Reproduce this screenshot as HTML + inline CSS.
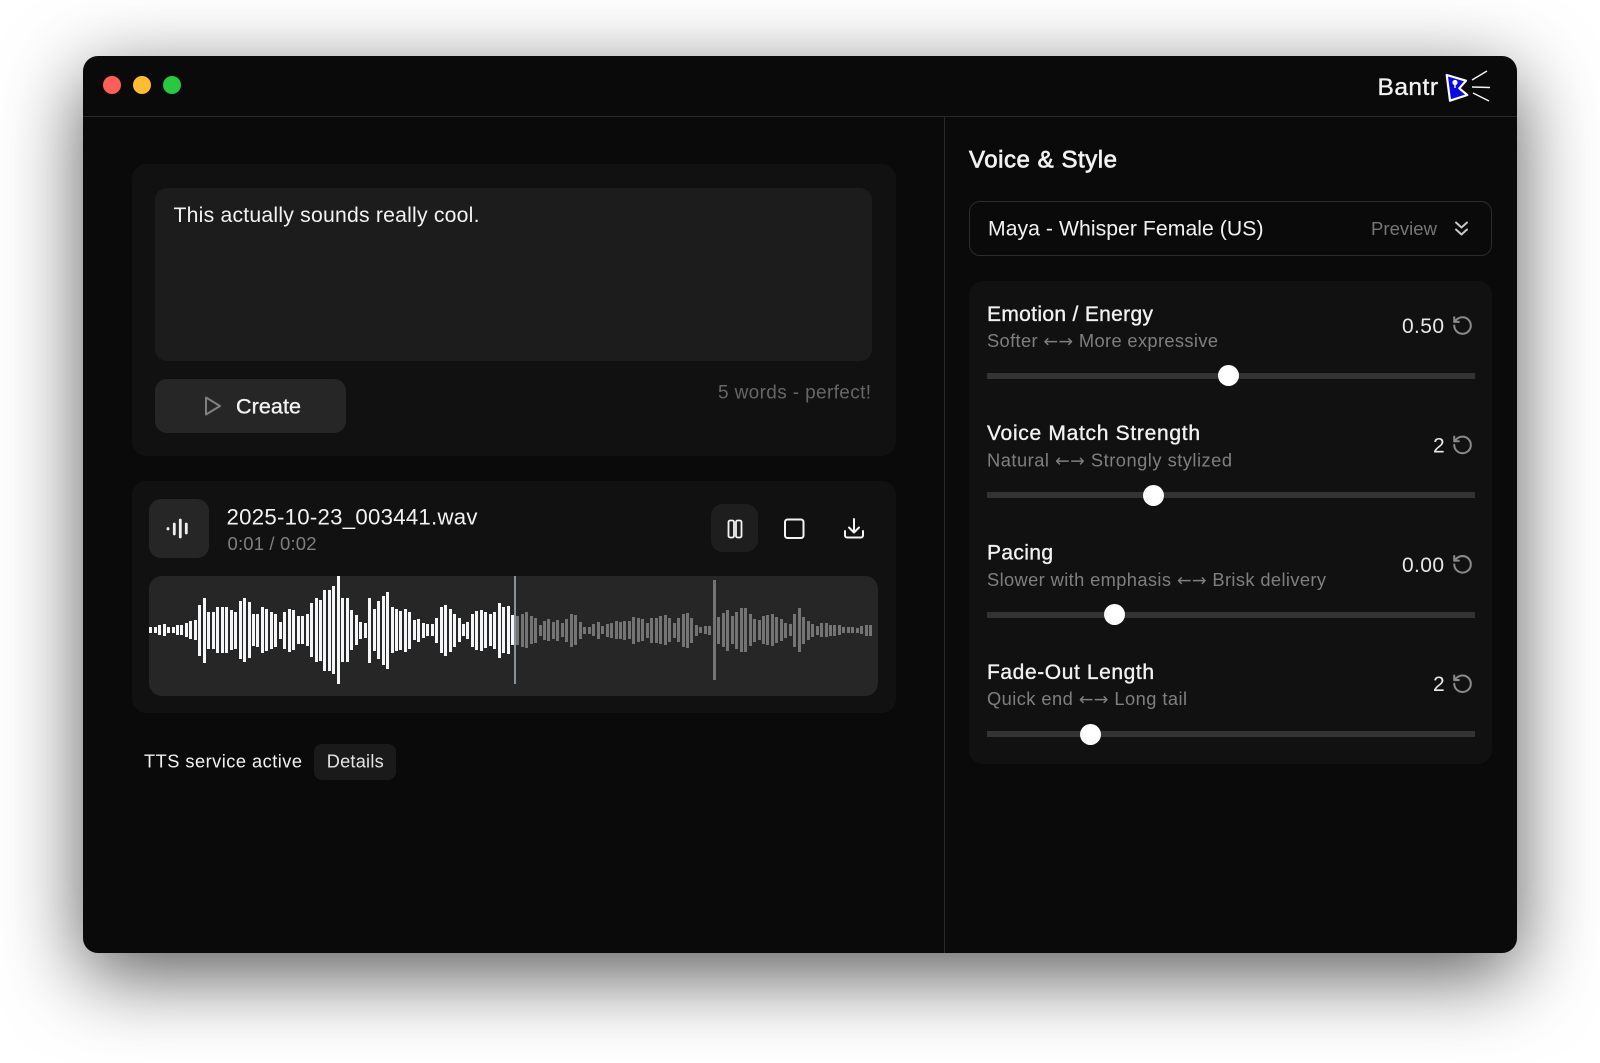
<!DOCTYPE html>
<html lang="en"><head><meta charset="utf-8"><title>Bantr</title>
<style>
html,body{margin:0;padding:0;background:#fff;width:1600px;height:1063px;overflow:hidden}
div,svg{position:absolute;box-sizing:border-box}
.win{left:83px;top:56px;width:1434px;height:897px;background:#0a0a0a;border-radius:15px;box-shadow:0 22px 80px rgba(0,0,0,.65)}
.card{background:#111;border-radius:14px}
.wave{left:149.2px;top:480px;height:300px;display:flex;align-items:center}
.wave i{display:block;flex:none;width:3px;margin-right:1.47px;background:#f4f6f8}
.wave.g{left:516.2px}
.wave.g i{background:#747474;margin-right:1.475px}
.tr{left:986.5px;width:488.5px;height:6px;background:#333}
.th{width:21px;height:21px;border-radius:50%;background:#fff}
text{font-family:"Liberation Sans",sans-serif;fill:#f2f2f2}
tspan{font-family:"DejaVu Sans",sans-serif}
.m{stroke:#f2f2f2;stroke-width:.35}
.t{font-size:21px}
.s{font-size:18.3px;fill:#7f7f7f}
.s tspan{font-size:17.5px}
.v{font-size:21px;fill:#e8e8e8}
</style></head><body>
<div class="win"></div>
<div style="left:83px;top:115.5px;width:1434px;height:1px;background:#2a2a2a"></div>
<div style="left:943.5px;top:116px;width:1px;height:837px;background:#2a2a2a"></div>
<div style="left:103px;top:76px;width:18px;height:18px;border-radius:50%;background:#ff5f57"></div>
<div style="left:133px;top:76px;width:18px;height:18px;border-radius:50%;background:#febc2e"></div>
<div style="left:163px;top:76px;width:18px;height:18px;border-radius:50%;background:#28c840"></div>

<div class="card" style="left:131.5px;top:164px;width:764px;height:292px"></div>
<div style="left:155px;top:188px;width:716.5px;height:173px;background:#1c1c1c;border-radius:12px"></div>
<div style="left:155px;top:379px;width:191px;height:54px;background:#262626;border-radius:12px"></div>

<div class="card" style="left:131.5px;top:481px;width:764px;height:232px"></div>
<div style="left:149px;top:499px;width:60px;height:59px;background:#262626;border-radius:12px"></div>
<div style="left:710.5px;top:504px;width:47.5px;height:48px;background:#1e1e1e;border-radius:12px"></div>
<div style="left:149px;top:576px;width:728.5px;height:120px;background:#262626;border-radius:13px"></div>

<div class="wave"><i style="height:6px"></i><i style="height:6px"></i><i style="height:9.3px"></i><i style="height:11.3px"></i><i style="height:6px"></i><i style="height:6px"></i><i style="height:9.3px"></i><i style="height:9.3px"></i><i style="height:14px"></i><i style="height:18px"></i><i style="height:20px"></i><i style="height:51px"></i><i style="height:65px"></i><i style="height:37px"></i><i style="height:37px"></i><i style="height:46px"></i><i style="height:46px"></i><i style="height:46px"></i><i style="height:40px"></i><i style="height:37px"></i><i style="height:58px"></i><i style="height:64px"></i><i style="height:56px"></i><i style="height:32px"></i><i style="height:33px"></i><i style="height:46px"></i><i style="height:42px"></i><i style="height:37px"></i><i style="height:33px"></i><i style="height:17px"></i><i style="height:37px"></i><i style="height:43px"></i><i style="height:40px"></i><i style="height:28px"></i><i style="height:28px"></i><i style="height:32px"></i><i style="height:54px"></i><i style="height:64px"></i><i style="height:61px"></i><i style="height:81px"></i><i style="height:81px"></i><i style="height:88px"></i><i style="height:108px"></i><i style="height:64px"></i><i style="height:64px"></i><i style="height:40px"></i><i style="height:30px"></i><i style="height:17px"></i><i style="height:15px"></i><i style="height:65px"></i><i style="height:42px"></i><i style="height:58px"></i><i style="height:69px"></i><i style="height:77px"></i><i style="height:46px"></i><i style="height:42px"></i><i style="height:39px"></i><i style="height:43px"></i><i style="height:37px"></i><i style="height:20px"></i><i style="height:23px"></i><i style="height:15px"></i><i style="height:12px"></i><i style="height:12px"></i><i style="height:25px"></i><i style="height:46px"></i><i style="height:51px"></i><i style="height:43px"></i><i style="height:33px"></i><i style="height:24px"></i><i style="height:12px"></i><i style="height:17px"></i><i style="height:33px"></i><i style="height:39px"></i><i style="height:41px"></i><i style="height:36px"></i><i style="height:32px"></i><i style="height:37px"></i><i style="height:55px"></i><i style="height:46px"></i><i style="height:48px"></i><i style="height:30px"></i></div>
<div class="wave g"><i style="height:29px"></i><i style="height:33px"></i><i style="height:36px"></i><i style="height:28px"></i><i style="height:25px"></i><i style="height:11px"></i><i style="height:19px"></i><i style="height:22px"></i><i style="height:17px"></i><i style="height:21px"></i><i style="height:14px"></i><i style="height:23px"></i><i style="height:33px"></i><i style="height:30px"></i><i style="height:17px"></i><i style="height:7px"></i><i style="height:7px"></i><i style="height:12px"></i><i style="height:17px"></i><i style="height:8px"></i><i style="height:13px"></i><i style="height:15px"></i><i style="height:18px"></i><i style="height:17px"></i><i style="height:19px"></i><i style="height:18px"></i><i style="height:27px"></i><i style="height:24px"></i><i style="height:22px"></i><i style="height:15px"></i><i style="height:25px"></i><i style="height:25px"></i><i style="height:28px"></i><i style="height:30px"></i><i style="height:24px"></i><i style="height:15px"></i><i style="height:24px"></i><i style="height:33px"></i><i style="height:35px"></i><i style="height:25px"></i><i style="height:11px"></i><i style="height:6px"></i><i style="height:8px"></i><i style="height:9px"></i><i style="height:100px"></i><i style="height:27px"></i><i style="height:34px"></i><i style="height:41px"></i><i style="height:28px"></i><i style="height:37px"></i><i style="height:44px"></i><i style="height:44px"></i><i style="height:32px"></i><i style="height:23px"></i><i style="height:20px"></i><i style="height:28px"></i><i style="height:30px"></i><i style="height:32px"></i><i style="height:26px"></i><i style="height:22px"></i><i style="height:15px"></i><i style="height:12px"></i><i style="height:33px"></i><i style="height:44px"></i><i style="height:27px"></i><i style="height:19px"></i><i style="height:13px"></i><i style="height:9px"></i><i style="height:14px"></i><i style="height:14px"></i><i style="height:11px"></i><i style="height:11px"></i><i style="height:10px"></i><i style="height:6px"></i><i style="height:6px"></i><i style="height:6px"></i><i style="height:5px"></i><i style="height:8px"></i><i style="height:11px"></i><i style="height:11px"></i></div>
<div style="left:514px;top:576px;width:1.5px;height:108px;background:#8b919b"></div>

<div style="left:314px;top:743.5px;width:82px;height:36px;background:#1a1a1a;border-radius:8px"></div>

<div style="left:969px;top:201px;width:523px;height:55px;border:1.5px solid #2c2c2c;border-radius:11px"></div>
<div class="card" style="left:969px;top:281px;width:523px;height:483px"></div>
<div class="tr" style="top:373px"></div><div class="th" style="left:1218px;top:365px"></div>
<div class="tr" style="top:492.4px"></div><div class="th" style="left:1142.5px;top:484.9px"></div>
<div class="tr" style="top:611.8px"></div><div class="th" style="left:1104px;top:604.3px"></div>
<div class="tr" style="top:731.2px"></div><div class="th" style="left:1080px;top:723.7px"></div>

<svg width="1600" height="1063" viewBox="0 0 1600 1063" style="left:0;top:0">
<text class="m" x="1377.5" y="95" font-size="24.5" textLength="60.5" lengthAdjust="spacing">Bantr</text>
<polygon points="1446.7,75 1466,80.7 1459.3,88.3 1467.3,95 1450,100.7" fill="#0a0ae6" stroke="#fff" stroke-width="2.2" stroke-linejoin="round"/>
<circle cx="1455" cy="82.5" r="2.6" fill="#fff"/><path d="M1455 84v4" stroke="#fff" stroke-width="1.4"/>
<path d="M1472 80l15-9M1472 87l18 .5M1473 93l16 8" stroke="#f2f2f2" stroke-width="1.5" fill="none"/>

<text x="173.5" y="222" font-size="21.2" textLength="306" lengthAdjust="spacing">This actually sounds really cool.</text>
<polygon points="206,397.5 206,414.5 220,406" fill="none" stroke="#808080" stroke-width="2" stroke-linejoin="round"/>
<text class="m" x="236" y="413.5" font-size="21.5" textLength="65" lengthAdjust="spacing">Create</text>
<text x="718" y="398.5" font-size="19" textLength="153" lengthAdjust="spacing" style="fill:#666">5 words - perfect!</text>

<path d="M168 528.5v.5M174.3 524v10M180.3 520v17M186.3 524v9" stroke="#f0f0f0" stroke-width="2.8" stroke-linecap="round" fill="none"/>
<text x="226.5" y="524.5" font-size="22.2" textLength="251" lengthAdjust="spacing">2025-10-23_003441.wav</text>
<text x="227.5" y="550" font-size="18.5" textLength="89" lengthAdjust="spacing" style="fill:#7f7f7f">0:01 / 0:02</text>

<g fill="none" stroke="#f4f4f4" stroke-width="1.8">
<rect x="728.5" y="520.5" width="5.5" height="17" rx="1.6"/>
<rect x="736" y="520.5" width="5.5" height="17" rx="1.6"/>
<rect x="785" y="519.5" width="18.5" height="18.5" rx="2.5" stroke-width="2"/>
<path d="M845 531v4.5a2 2 0 0 0 2 2h14a2 2 0 0 0 2-2V531M854 519v13.5M849 527.5l5 5 5-5" stroke-width="2" stroke-linecap="round" stroke-linejoin="round"/>
</g>

<text x="144" y="767.7" font-size="18.2" textLength="158" lengthAdjust="spacing">TTS service active</text>
<text x="326.7" y="767.7" font-size="18.2" textLength="57" lengthAdjust="spacing" style="fill:#e4e4e4">Details</text>

<text x="969" y="167.5" font-size="24" textLength="148" lengthAdjust="spacing" style="stroke:#f2f2f2;stroke-width:.7">Voice &amp; Style</text>
<text x="988" y="235.5" font-size="21.2" textLength="275.5" lengthAdjust="spacing">Maya - Whisper Female (US)</text>
<text x="1371" y="235" font-size="18.5" textLength="66" lengthAdjust="spacing" style="fill:#777">Preview</text>
<path d="M1456 223l5.5 5 5.5-5M1456 230l5.5 5 5.5-5" transform="translate(0,-.5)" fill="none" stroke="#c8c8c8" stroke-width="2" stroke-linecap="round" stroke-linejoin="round"/>

<text class="t m" x="987" y="320.8" textLength="166" lengthAdjust="spacing">Emotion / Energy</text>
<text class="s" x="987" y="347" textLength="231" lengthAdjust="spacing">Softer <tspan>←→</tspan> More expressive</text>
<text class="v" x="1402" y="333" textLength="42" lengthAdjust="spacing">0.50</text>

<text class="t m" x="987" y="440.2" textLength="213" lengthAdjust="spacing">Voice Match Strength</text>
<text class="s" x="987" y="466.4" textLength="245" lengthAdjust="spacing">Natural <tspan>←→</tspan> Strongly stylized</text>
<text class="v" x="1433" y="452.4" textLength="11.5" lengthAdjust="spacing">2</text>

<text class="t m" x="987" y="559.6" textLength="66" lengthAdjust="spacing">Pacing</text>
<text class="s" x="987" y="585.8" textLength="339" lengthAdjust="spacing">Slower with emphasis <tspan>←→</tspan> Brisk delivery</text>
<text class="v" x="1402" y="571.8" textLength="42" lengthAdjust="spacing">0.00</text>

<text class="t m" x="987" y="679" textLength="167" lengthAdjust="spacing">Fade-Out Length</text>
<text class="s" x="987" y="705.2" textLength="200" lengthAdjust="spacing">Quick end <tspan>←→</tspan> Long tail</text>
<text class="v" x="1433" y="691.2" textLength="11.5" lengthAdjust="spacing">2</text>

<g fill="none" stroke="#8a8a8a" stroke-width="2.2" stroke-linecap="round" stroke-linejoin="round">
<g transform="translate(1451.5,314.5) scale(.92)"><path d="M3 12a9 9 0 1 0 9-9 9.75 9.75 0 0 0-6.74 2.74L3 8"/><path d="M3 3v5h5"/></g>
<g transform="translate(1451.5,433.9) scale(.92)"><path d="M3 12a9 9 0 1 0 9-9 9.75 9.75 0 0 0-6.74 2.74L3 8"/><path d="M3 3v5h5"/></g>
<g transform="translate(1451.5,553.3) scale(.92)"><path d="M3 12a9 9 0 1 0 9-9 9.75 9.75 0 0 0-6.74 2.74L3 8"/><path d="M3 3v5h5"/></g>
<g transform="translate(1451.5,672.7) scale(.92)"><path d="M3 12a9 9 0 1 0 9-9 9.75 9.75 0 0 0-6.74 2.74L3 8"/><path d="M3 3v5h5"/></g>
</g>
</svg>
</body></html>
